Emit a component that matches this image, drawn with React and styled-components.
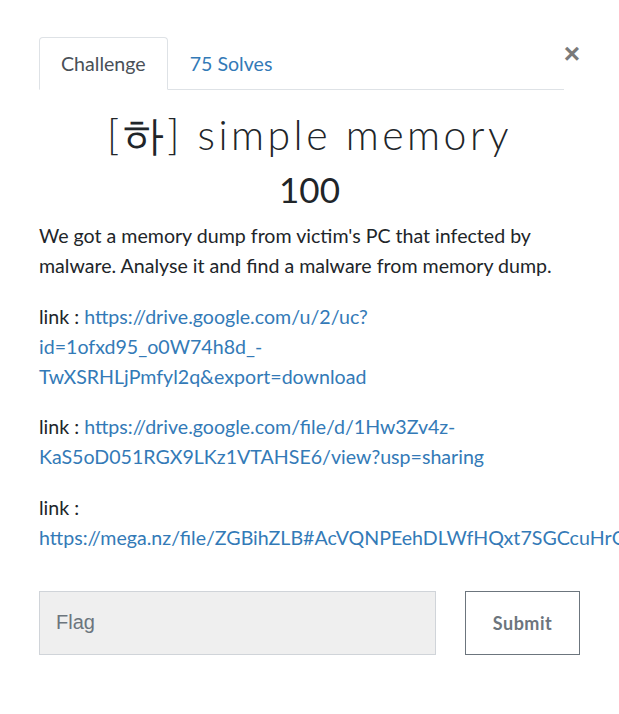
import React from "react";
import styled, { createGlobalStyle } from "styled-components";

const GlobalStyle = createGlobalStyle`
  body {
    margin: 0;
    background: #ffffff;
    font-family: Lato, "Noto Sans", sans-serif;
    color: #212529;
    overflow-x: hidden;
  }
`;

const App = () => {
  return (
    <>
      <GlobalStyle />
      <Modal>
        <Header>
          <Tabs>
            <Tab active>Challenge</Tab>
            <Tab>75 Solves</Tab>
          </Tabs>
          <Close>×</Close>
        </Header>
        <Title>[하] simple memory</Title>
        <Value>100</Value>
        <Desc>
          <p>
            We got a memory dump from victim's PC that infected by malware.
            Analyse it and find a malware from memory dump.
          </p>
          <p>
            link :{" "}
            <Link>https://drive.google.com/u/2/uc?id=1ofxd95_o0W74h8d_-TwXSRHLjPmfyl2q&amp;export=download</Link>
          </p>
          <p>
            link :{" "}
            <Link>https://drive.google.com/file/d/1Hw3Zv4z-KaS5oD051RGX9LKz1VTAHSE6/view?usp=sharing</Link>
          </p>
          <p>
            link :{" "}
            <Link>https://mega.nz/file/ZGBihZLB#AcVQNPEehDLWfHQxt7SGCcuHrQmLUtYkzgW7Q_R2M8o</Link>
          </p>
        </Desc>
        <SubmitRow>
          <FlagInput placeholder="Flag" />
          <SubmitButton>Submit</SubmitButton>
        </SubmitRow>
      </Modal>
    </>
  );
};

export default App;

const Modal = styled.div`
  width: 541px;
  padding: 37px 0 0 39px;
`;

const Header = styled.div`
  display: flex;
  align-items: flex-start;
`;

const Tabs = styled.div`
  display: flex;
  width: 525px;
  border-bottom: 1px solid #dee2e6;
`;

const Tab = styled.div`
  height: 53px;
  box-sizing: border-box;
  padding: 0 21px;
  display: flex;
  align-items: center;
  font-size: 19.6px;
  margin-bottom: -1px;
  border: 1px solid ${(p) => (p.active ? "#dee2e6" : "transparent")};
  border-bottom-color: ${(p) => (p.active ? "#ffffff" : "transparent")};
  border-radius: 4px 4px 0 0;
  background: ${(p) => (p.active ? "#ffffff" : "transparent")};
  color: ${(p) => (p.active ? "#495057" : "#337ab7")};
`;

const Close = styled.div`
  flex: 1;
  text-align: right;
  font-family: "Liberation Sans", Arial, sans-serif;
  font-size: 28px;
  font-weight: 700;
  line-height: 1;
  color: #7a7a7a;
  margin-top: 3px;
`;

const Title = styled.h3`
  margin: 18px 0 0;
  text-align: center;
  font-weight: 300;
  font-size: 41px;
  letter-spacing: 3.5px;
  line-height: 54px;
  color: #212529;
`;

const Value = styled.h4`
  margin: 0;
  text-align: center;
  font-weight: 400;
  font-size: 35px;
  line-height: 55px;
  color: #212529;
`;

const Desc = styled.div`
  margin-top: 4px;
  font-size: 19.6px;
  line-height: 30px;
  color: #212529;

  p {
    margin: 0 0 20.5px;
  }
`;

const Link = styled.a`
  color: #337ab7;
  text-decoration: none;
`;

const SubmitRow = styled.div`
  display: flex;
  justify-content: space-between;
  margin-top: 38px;
`;

const FlagInput = styled.input`
  width: 397px;
  height: 64px;
  box-sizing: border-box;
  padding: 0 16px;
  background: #efefef;
  border: 1px solid #d0d4d9;
  font-family: "Liberation Sans", Arial, sans-serif;
  font-size: 20px;
  color: #495057;
  outline: none;

  &::placeholder {
    color: #6c757d;
  }
`;

const SubmitButton = styled.button`
  width: 115px;
  height: 64px;
  background: #ffffff;
  border: 1px solid #6c757d;
  font-family: Lato, sans-serif;
  font-weight: 700;
  font-size: 18px;
  letter-spacing: 0.5px;
  color: #6c757d;
`;
